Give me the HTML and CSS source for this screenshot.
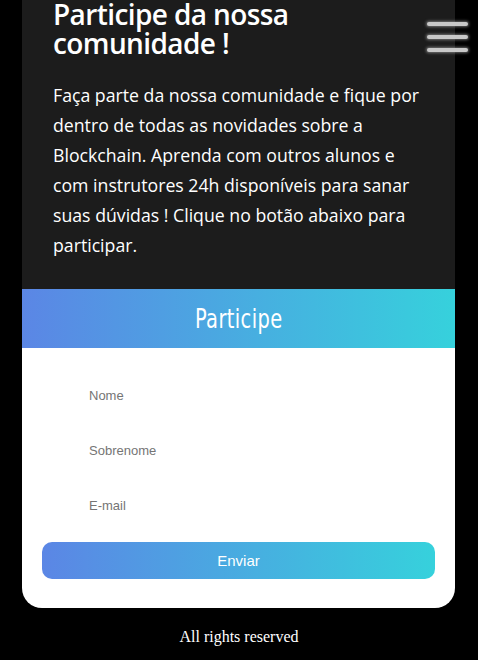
FILE: index.html
```html
<!DOCTYPE html>
<html lang="pt-BR">
<head>
<meta charset="utf-8">
<title>Participe</title>
<link rel="stylesheet" href="styles.css">
</head>
<body>
<div class="menu-btn" aria-label="menu">
  <span class="bar"></span>
  <span class="bar"></span>
  <span class="bar"></span>
</div>
<main class="card">
  <section class="intro">
    <h1 class="title">Participe da nossa comunidade !</h1>
    <p class="text">Faça parte da nossa comunidade e fique por dentro de todas as novidades sobre a Blockchain. Aprenda com outros alunos e com instrutores 24h disponíveis para sanar suas dúvidas ! Clique no botão abaixo para participar.</p>
  </section>
  <div class="banner"><span class="banner-text">Participe</span></div>
  <form class="form">
    <input class="field" type="text" placeholder="Nome">
    <input class="field" type="text" placeholder="Sobrenome">
    <input class="field" type="email" placeholder="E-mail">
    <button class="submit" type="button">Enviar</button>
  </form>
</main>
<footer class="footer">All rights reserved</footer>
</body>
</html>
```
FILE: styles.css
```css
html, body {
  margin: 0;
  padding: 0;
  background: #000;
}
body {
  width: 478px;
  min-height: 660px;
}
.menu-btn {
  position: absolute;
  top: 22px;
  left: 427px;
  width: 41px;
  display: flex;
  flex-direction: column;
  gap: 9px;
}
.bar {
  display: block;
  height: 4px;
  background: #c8c8c8;
  border-radius: 2px;
  box-shadow: 0 0 3px 1px rgba(190, 190, 190, 0.55);
}
.card {
  margin: 0 23px 0 22px;
  width: 433px;
  background: #fff;
  border-radius: 0 0 20px 20px;
  overflow: hidden;
}
.intro {
  background: #1c1c1c;
  padding: 1px 31px 29px 31px;
  color: #fff;
  font-family: "Open Sans", sans-serif;
}
.title {
  margin: -1px 0 22px 0;
  font-size: 28px;
  line-height: 29px;
  font-weight: 600;
  letter-spacing: -0.6px;
}
.text {
  margin: 0;
  font-size: 17.7px;
  line-height: 30px;
  font-weight: 500;
}
.banner {
  height: 59px;
  background: linear-gradient(to right, #5b86e5, #36d1dc);
  display: flex;
  align-items: center;
  justify-content: center;
}
.banner-text {
  color: #fff;
  font-family: "DejaVu Sans Condensed", sans-serif;
  font-weight: 300;
  font-size: 27px;
  transform: scaleX(0.8);
  letter-spacing: 0.5px;
}
.form {
  display: flex;
  flex-direction: column;
  padding: 30px 20px 29px 20px;
}
.field {
  display: block;
  margin: 0 0 20px 40px;
  width: 313px;
  height: 35px;
  box-sizing: border-box;
  border: none;
  outline: none;
  background: transparent;
  padding: 0 7px;
  font-family: "Liberation Sans", Arial, sans-serif;
  font-size: 13px;
  color: #333;
}
.field::placeholder {
  color: #757575;
}
.field:last-of-type {
  margin-bottom: 19px;
}
.submit {
  height: 37px;
  border: none;
  border-radius: 10px;
  background: linear-gradient(to right, #5b86e5, #36d1dc);
  color: #fff;
  font-family: "Liberation Sans", Arial, sans-serif;
  font-size: 15px;
}
.footer {
  text-align: center;
  color: #fff;
  font-family: "Liberation Serif", "Times New Roman", serif;
  font-size: 16px;
  padding-top: 20px;
}
```
